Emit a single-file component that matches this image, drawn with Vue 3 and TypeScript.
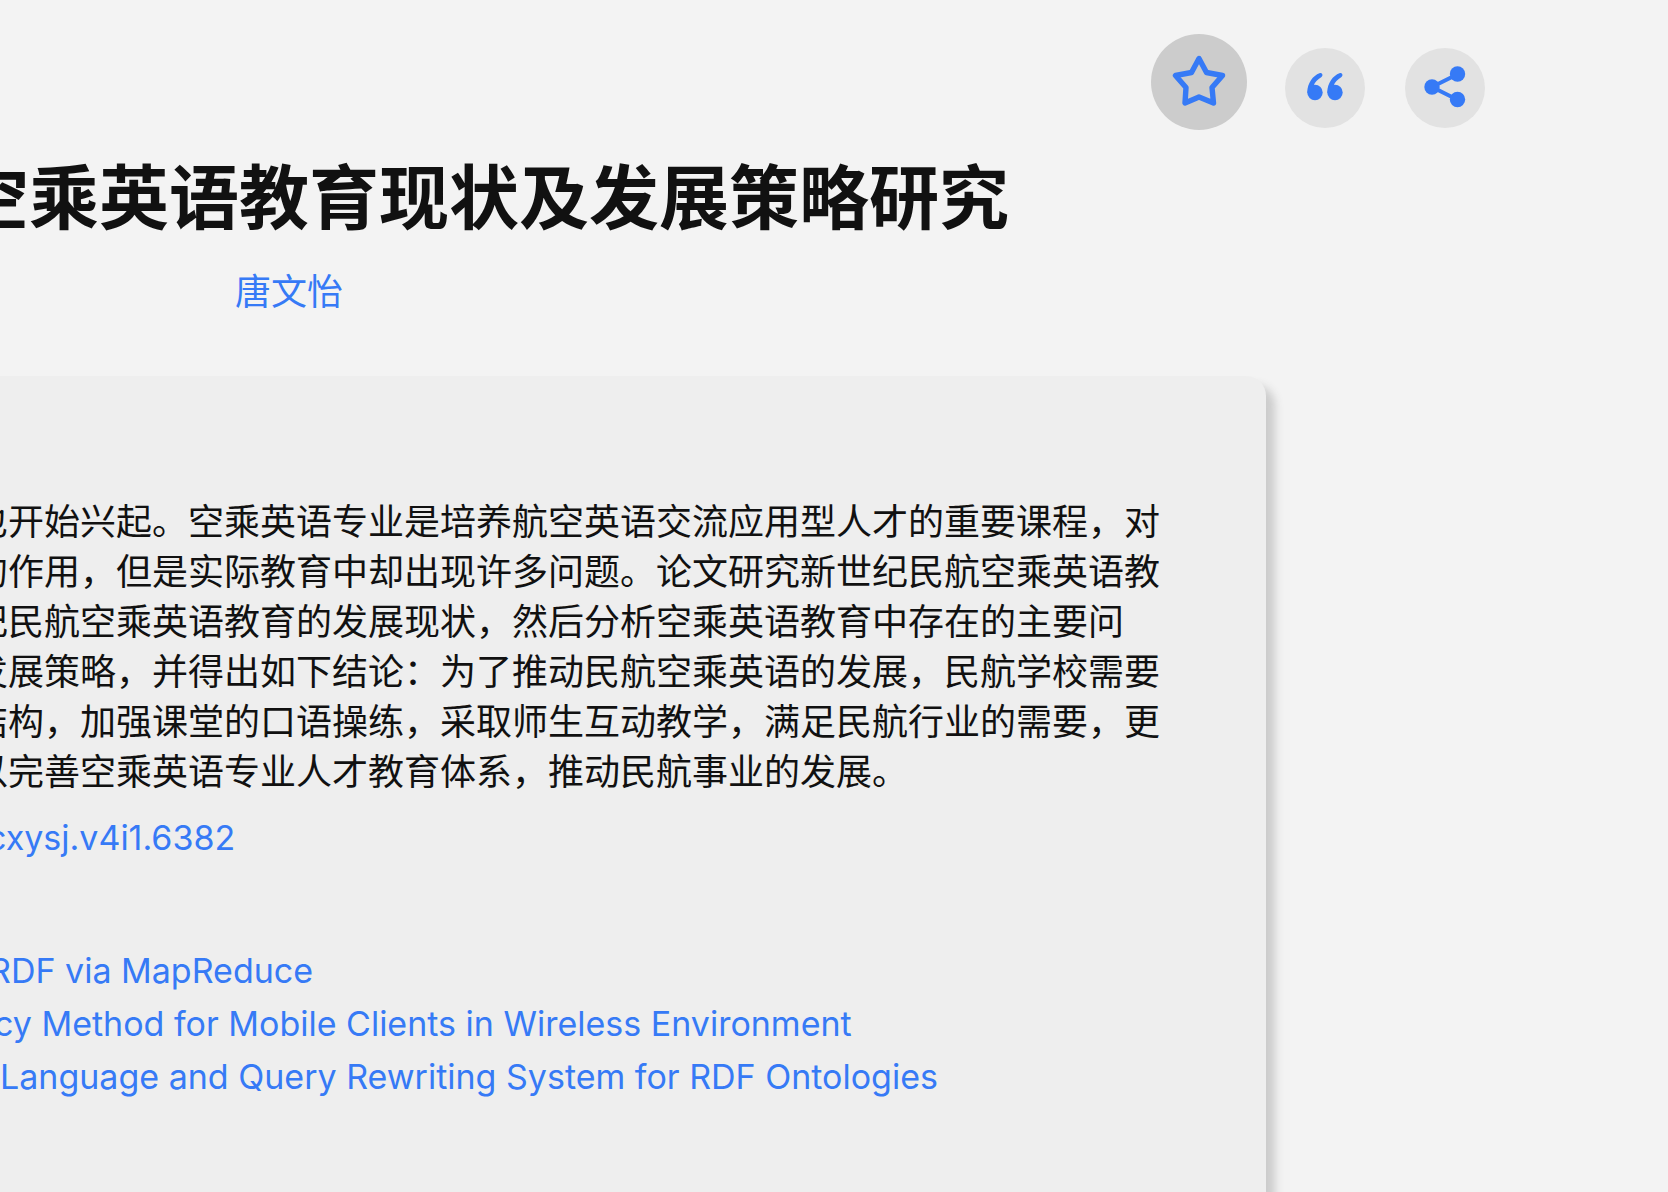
<script setup lang="ts">
const abstractLines: string[] = [
  '也开始兴起。空乘英语专业是培养航空英语交流应用型人才的重要课程，对',
  '的作用，但是实际教育中却出现许多问题。论文研究新世纪民航空乘英语教',
  '纪民航空乘英语教育的发展现状，然后分析空乘英语教育中存在的主要问',
  '发展策略，并得出如下结论：为了推动民航空乘英语的发展，民航学校需要',
  '结构，加强课堂的口语操练，采取师生互动教学，满足民航行业的需要，更',
  '以完善空乘英语专业人才教育体系，推动民航事业的发展。',
]
</script>

<template>
  <div class="page">
    <nav class="actions" aria-label="论文操作">
      <button class="action active" type="button" aria-label="收藏">
        <svg viewBox="0 0 96 96" fill="none" stroke="#367af6" stroke-width="5.400" stroke-linejoin="round">
          <path d="M48 24.500 L55.500 38.500 L71.500 41.500 L61 53.500 L62.500 69 L48 63 L34 69 L35 53.500 L24.500 41.500 L40.500 38.500 Z" />
        </svg>
      </button>
      <button class="action" type="button" aria-label="引用">
        <svg viewBox="0 0 80 80" fill="#367af6">
          <g id="mark">
            <circle cx="30" cy="44.500" r="7.700" />
            <path d="M22.300 44.500 C22.300 35 28 27.500 34.500 25.200 C37.300 24.500 38.500 27.500 36.500 29 C32.500 31.800 29.700 34 28.600 38 L27 47 Z" />
          </g>
          <use href="#mark" x="20" />
        </svg>
      </button>
      <button class="action" type="button" aria-label="分享">
        <svg viewBox="0 0 80 80" fill="#367af6">
          <path d="M53 26 L27 39 L53 52" fill="none" stroke="#367af6" stroke-width="4" />
          <circle cx="52.500" cy="26" r="7.700" />
          <circle cx="27" cy="39" r="7.700" />
          <circle cx="52.500" cy="51.500" r="7.700" />
        </svg>
      </button>
    </nav>
    <header class="heading">
      <h1>空乘英语教育现状及发展策略研究</h1>
      <a class="author" href="#author">唐文怡</a>
    </header>
    <main class="card">
      <p class="abstract">
        <span v-for="line in abstractLines" :key="line">{{ line }}</span>
      </p>
      <a class="doi" href="#doi">cxysj.v4i1.6382</a>
      <ul class="related">
        <li class="first"><a href="#mapreduce">RDF via MapReduce</a></li>
        <li class="second"><a href="#wireless">cy Method for Mobile Clients in Wireless Environment</a></li>
        <li class="third"><a href="#ontologies">Language and Query Rewriting System for RDF Ontologies</a></li>
      </ul>
    </main>
  </div>
</template>

<style>
body {
  margin: 0;
  background: #f3f3f3;
}
</style>

<style scoped>
.page {
  box-sizing: border-box;
  display: flex;
  flex-direction: column;
  min-height: 100vh;
  overflow: hidden;
  background: #f3f3f3;
  color: #111;
  font-family: Inter, "Noto Sans CJK SC", sans-serif;
  font-size: 36px;
  line-height: 50px;
  white-space: nowrap;
}
.actions {
  display: flex;
  justify-content: flex-end;
  gap: 40px;
  padding: 34px 183px 0 0;
}
.action {
  width: 80px;
  height: 80px;
  margin: 14px 0 0;
  padding: 0;
  border: 0;
  border-radius: 50%;
  background: #e2e2e2;
  cursor: pointer;
}
.action.active {
  width: 96px;
  height: 96px;
  margin: 0 -2px 0 0;
  background: #ccc;
}
.action svg {
  display: block;
  width: 100%;
  height: 100%;
}
.heading {
  display: flex;
  flex-direction: column;
  align-items: flex-start;
  height: 246px;
}
h1 {
  margin: 19px 0 0 -41px;
  font-size: 70px;
  font-weight: 700;
  line-height: 100px;
}
a {
  color: #367af6;
  text-decoration: none;
}
.author {
  margin: 18px 0 0 235px;
}
.card {
  flex: 1;
  margin-right: 402px;
  padding: 121px 0 80px;
  border-radius: 0 20px 0 0;
  background: #eee;
  box-shadow: 9px 9px 8px #ccc;
}
.abstract {
  margin: 0 0 16px -28px;
}
.abstract span {
  display: block;
}
.doi {
  display: block;
  margin-left: -13px;
  font-size: 34px;
}
.related {
  margin: 81px 0 0;
  padding: 0;
  list-style: none;
  font-size: 34px;
  line-height: 53px;
}
.first {
  margin-left: -11px;
}
.second {
  margin-left: -6px;
}
</style>
